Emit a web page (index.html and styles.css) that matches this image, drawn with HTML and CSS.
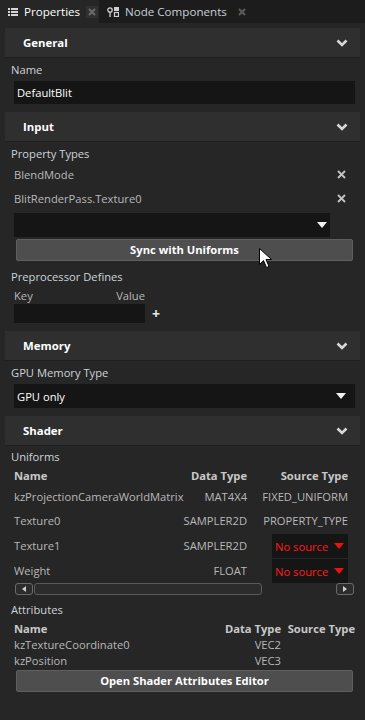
FILE: index.html
```html
<!DOCTYPE html>
<html lang="en">
  <head>
    <meta charset="UTF-8" />
    <meta name="viewport" content="width=device-width, initial-scale=1.0" />
    <title>Properties</title>
    <link rel="stylesheet" href="styles.css">
  </head>
  <body>
    <div class="tab-bar">
      <div class="tab active">
        <svg class="tab-icon" width="10" height="8" viewBox="0 0 10 8">
          <rect x="0" y="0" width="2" height="2" fill="#d6d6d6" />
          <rect x="3" y="0" width="7" height="2" fill="#d6d6d6" />
          <rect x="0" y="3" width="2" height="2" fill="#d6d6d6" />
          <rect x="3" y="3" width="7" height="2" fill="#d6d6d6" />
          <rect x="0" y="6" width="2" height="2" fill="#d6d6d6" />
          <rect x="3" y="6" width="7" height="2" fill="#d6d6d6" />
        </svg>
        <span class="tab-title">Properties</span>
        <span class="tab-close boxed">
          <svg width="8" height="8" viewBox="0 0 8 8">
            <path d="M1 1 L7 7 M7 1 L1 7" stroke="#6a6a6a" stroke-width="2" />
          </svg>
        </span>
      </div>
      <div class="tab">
        <svg class="tab-icon" width="12" height="10" viewBox="0 0 12 10">
          <circle cx="3" cy="3" r="2.2" fill="none" stroke="#d0d0d0" stroke-width="1.3" />
          <rect x="2.4" y="5" width="1.3" height="5" fill="#d0d0d0" />
          <rect x="7" y="0" width="5" height="4" fill="#d0d0d0" />
          <rect x="7.5" y="5.5" width="4" height="4" fill="none" stroke="#d0d0d0" stroke-width="1.2" />
        </svg>
        <span class="tab-title">Node Components</span>
        <span class="tab-close">
          <svg width="8" height="8" viewBox="0 0 8 8">
            <path d="M1 1 L7 7 M7 1 L1 7" stroke="#5c5c5c" stroke-width="2" />
          </svg>
        </span>
      </div>
    </div>

    <div class="panel">
      <div class="section-header">
        <span>General</span>
        <svg class="chevron" width="12" height="8" viewBox="0 0 12 8">
          <path d="M1.5 1.5 L6 6 L10.5 1.5" fill="none" stroke="#d8d8d8" stroke-width="2.6" />
        </svg>
      </div>
      <div class="section-body">
        <div class="field-label">Name</div>
        <div class="text-input">DefaultBlit</div>
      </div>

      <div class="section-header">
        <span>Input</span>
        <svg class="chevron" width="12" height="8" viewBox="0 0 12 8">
          <path d="M1.5 1.5 L6 6 L10.5 1.5" fill="none" stroke="#d8d8d8" stroke-width="2.6" />
        </svg>
      </div>
      <div class="section-body">
        <div class="field-label">Property Types</div>
        <div class="list-row">
          <span>BlendMode</span>
          <svg width="9" height="9" viewBox="0 0 9 9">
            <path d="M1 1 L8 8 M8 1 L1 8" stroke="#c4c4c4" stroke-width="1.8" />
          </svg>
        </div>
        <div class="list-row">
          <span>BlitRenderPass.Texture0</span>
          <svg width="9" height="9" viewBox="0 0 9 9">
            <path d="M1 1 L8 8 M8 1 L1 8" stroke="#c4c4c4" stroke-width="1.8" />
          </svg>
        </div>
        <div class="dropdown short">
          <span></span>
          <svg width="10" height="6" viewBox="0 0 10 6">
            <path d="M0 0 L10 0 L5 6 Z" fill="#f2f2f2" />
          </svg>
        </div>
        <div class="button">Sync with Uniforms</div>
        <div class="field-label">Preprocessor Defines</div>
        <div class="kv-head">
          <span>Key</span>
          <span>Value</span>
        </div>
        <div class="kv-row">
          <div class="kv-input"></div>
          <span class="plus">+</span>
        </div>
      </div>

      <div class="section-header">
        <span>Memory</span>
        <svg class="chevron" width="12" height="8" viewBox="0 0 12 8">
          <path d="M1.5 1.5 L6 6 L10.5 1.5" fill="none" stroke="#d8d8d8" stroke-width="2.6" />
        </svg>
      </div>
      <div class="section-body">
        <div class="field-label">GPU Memory Type</div>
        <div class="dropdown">
          <span>GPU only</span>
          <svg width="10" height="6" viewBox="0 0 10 6">
            <path d="M0 0 L10 0 L5 6 Z" fill="#f2f2f2" />
          </svg>
        </div>
      </div>

      <div class="section-header">
        <span>Shader</span>
        <svg class="chevron" width="12" height="8" viewBox="0 0 12 8">
          <path d="M1.5 1.5 L6 6 L10.5 1.5" fill="none" stroke="#d8d8d8" stroke-width="2.6" />
        </svg>
      </div>
      <div class="section-body tight">
        <div class="field-label">Uniforms</div>
        <div class="uniforms">
          <div class="th">Name</div>
          <div class="th right">Data Type</div>
          <div class="th right">Source Type</div>

          <div class="td r1">kzProjectionCameraWorldMatrix</div>
          <div class="td r1 right">MAT4X4</div>
          <div class="td r1 right">FIXED_UNIFORM</div>

          <div class="td r2">Texture0</div>
          <div class="td r2 right">SAMPLER2D</div>
          <div class="td r2 right">PROPERTY_TYPE</div>

          <div class="td r3">Texture1</div>
          <div class="td r3 right">SAMPLER2D</div>
          <div class="td r3 source">
            <div class="no-source">
              <span>No source</span>
              <svg width="10" height="6" viewBox="0 0 10 6">
                <path d="M0 0 L10 0 L5 6 Z" fill="#f01010" />
              </svg>
            </div>
          </div>

          <div class="td r4">Weight</div>
          <div class="td r4 right">FLOAT</div>
          <div class="td r4 source">
            <div class="no-source">
              <span>No source</span>
              <svg width="10" height="6" viewBox="0 0 10 6">
                <path d="M0 0 L10 0 L5 6 Z" fill="#f01010" />
              </svg>
            </div>
          </div>
        </div>
        <div class="hscroll">
          <div class="scroll-btn">
            <svg width="4" height="6" viewBox="0 0 4 6"><path d="M4 0 L4 6 L0 3 Z" fill="#cfcfcf" /></svg>
          </div>
          <div class="scroll-thumb"></div>
          <div class="scroll-track"></div>
          <div class="scroll-btn">
            <svg width="4" height="6" viewBox="0 0 4 6"><path d="M0 0 L0 6 L4 3 Z" fill="#cfcfcf" /></svg>
          </div>
        </div>

        <div class="field-label">Attributes</div>
        <div class="attributes">
          <div class="th">Name</div>
          <div class="th right">Data Type</div>
          <div class="th right">Source Type</div>

          <div class="td">kzTextureCoordinate0</div>
          <div class="td right">VEC2</div>
          <div class="td"></div>

          <div class="td">kzPosition</div>
          <div class="td right">VEC3</div>
          <div class="td"></div>
        </div>
        <div class="button">Open Shader Attributes Editor</div>
      </div>
    </div>

    <svg class="cursor" width="14" height="21" viewBox="0 0 14 21">
      <path d="M0.5 0.5 L0.5 16.5 L4.5 12.5 L7.5 19.5 L10 18.5 L7 11.5 L12.5 11.5 Z" fill="#ffffff" stroke="#000000" stroke-width="1" />
    </svg>
  </body>
</html>
```

FILE: styles.css
```css
* {
  box-sizing: border-box;
}
body {
  margin: 0;
  font-family: "Open Sans", "Noto Sans", sans-serif;
  font-size: 11.2px;
  background: #262626;
  color: #d4d4d4;
  width: 365px;
  height: 720px;
  overflow: hidden;
  position: relative;
}
.tab-bar {
  display: flex;
  height: 23px;
  background: #1c1c1c;
}
.tab {
  display: flex;
  align-items: center;
  padding: 0 0 0 8px;
  height: 23px;
  color: #c8d0d8;
  font-size: 11.6px;
}
.tab.active {
  background: #262626;
  width: 99px;
  color: #ffffff;
}
.tab-icon {
  margin-right: 6px;
}
.tab-close {
  display: flex;
  align-items: center;
  justify-content: center;
  width: 12px;
  height: 12px;
  margin-left: 9px;
}
.tab-close.boxed {
  background: #303030;
  margin-left: 6px;
}
.panel {
  padding-top: 5px;
}
.section-header {
  display: flex;
  align-items: center;
  justify-content: space-between;
  height: 30px;
  margin: 0 5px;
  padding: 0 12px 0 18px;
  background: #2f2f2f;
  border-bottom: 1px solid #1f1f1f;
  color: #ffffff;
  font-weight: 700;
  font-size: 11.4px;
}
.section-body {
  padding: 4px 10px 8px 11px;
}
.section-body.tight {
  padding-top: 3px;
}
.field-label {
  height: 16px;
  line-height: 16px;
  color: #cdd3d9;
}
.text-input {
  margin: 3px 0 0 3px;
  height: 23px;
  line-height: 23px;
  padding-left: 3px;
  background: #151515;
  color: #ffffff;
}
.list-row {
  display: flex;
  align-items: center;
  justify-content: space-between;
  height: 24px;
  padding: 0 9px 0 3px;
  color: #b8b8b8;
}
.dropdown {
  display: flex;
  align-items: center;
  justify-content: space-between;
  height: 24px;
  margin-left: 3px;
  padding: 0 9px 0 3px;
  background: #151515;
  color: #ffffff;
}
.dropdown.short {
  margin-top: 3px;
  margin-right: 25px;
  padding-right: 3px;
}
.button {
  height: 22px;
  line-height: 20px;
  margin: 2px 2px 0 5px;
  background: #4e4e4e;
  border: 1px solid #5f5f5f;
  border-radius: 2px;
  color: #ffffff;
  font-weight: 700;
  text-align: center;
}
.button + .field-label {
  margin-top: 8px;
}
.kv-head {
  display: flex;
  justify-content: space-between;
  width: 134px;
  height: 17px;
  line-height: 18px;
  padding-left: 3px;
  margin-top: 2px;
  color: #b8b8b8;
}
.kv-row {
  display: flex;
  align-items: center;
}
.kv-input {
  width: 131px;
  height: 19px;
  margin-left: 3px;
  background: #151515;
}
.plus {
  margin-left: 7px;
  color: #e8e8e8;
  font-weight: 700;
  font-size: 14px;
}
.section-body > .dropdown:last-child {
  margin-top: 3px;
}
.uniforms {
  display: grid;
  grid-template-columns: 1fr auto 101px;
  width: 334px;
  margin: 1px 0 0 3px;
}
.th {
  height: 20px;
  line-height: 20px;
  font-weight: 700;
  color: #c8c8c8;
  white-space: nowrap;
}
.td {
  line-height: 22px;
  height: 22px;
  color: #b8b8b8;
  white-space: nowrap;
}
.td.r2,
.td.r3,
.td.r4 {
  height: 25px;
  line-height: 25px;
}
.right {
  text-align: right;
}
.source {
  display: flex;
  justify-content: flex-end;
  padding-top: 1px;
}
.no-source {
  display: flex;
  align-items: center;
  justify-content: space-between;
  width: 76px;
  height: 24px;
  padding: 0 4px 0 3px;
  background: #151515;
  color: #ff1a1a;
}
.hscroll {
  display: flex;
  align-items: center;
  height: 12px;
  margin: 0 0 0 4px;
  width: 339px;
}
.scroll-btn {
  display: flex;
  align-items: center;
  justify-content: center;
  width: 18px;
  height: 12px;
  border: 1px solid #6a6a6a;
  border-radius: 3px;
  background: #2c2c2c;
}
.scroll-thumb {
  width: 228px;
  height: 12px;
  margin-left: 1px;
  border: 1px solid #5a5a5a;
  border-radius: 3px;
  background: #2c2c2c;
}
.scroll-track {
  flex: 1;
}
.hscroll + .field-label {
  margin-top: 7px;
}
.attributes {
  display: grid;
  grid-template-columns: 1fr auto 74px;
  width: 341px;
  margin: 3px 0 0 3px;
}
.attributes .th,
.attributes .td {
  height: 16px;
  line-height: 16px;
}
.attributes + .button {
  margin-top: 1px;
}
.cursor {
  position: absolute;
  left: 259px;
  top: 248px;
}
```
